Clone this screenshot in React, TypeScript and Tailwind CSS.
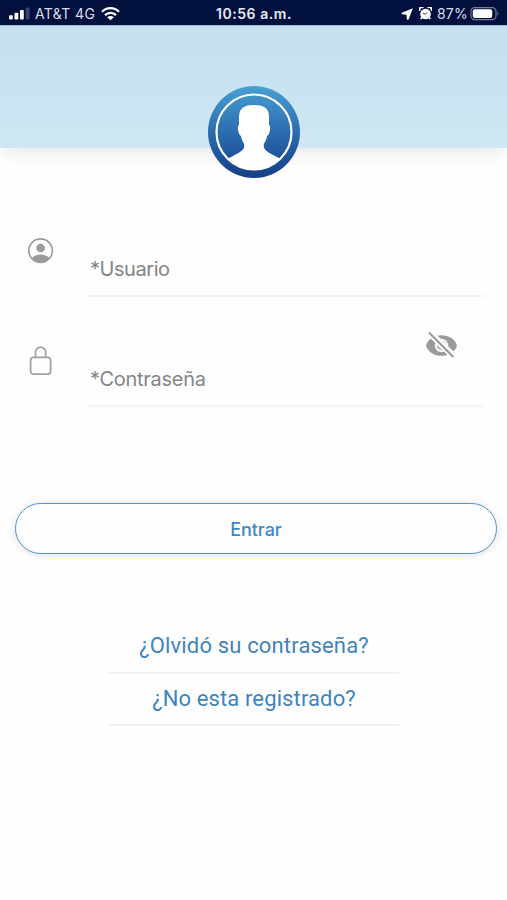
import React from "react";

function StatusBar() {
  return (
    <div className="relative flex h-[25px] items-center justify-between bg-[#02103d] pl-[9px] pr-[7px] pt-[2px] text-[#d9deef]">
      <div className="flex items-center">
        <svg className="h-[13px] w-[21px]" viewBox="0 0 21 13">
          <rect x="0" y="8.2" width="3.8" height="4.3" rx="1" fill="#fff" />
          <rect x="5.5" y="5.8" width="3.8" height="6.7" rx="1" fill="#fff" />
          <rect x="11" y="3" width="3.8" height="9.5" rx="1" fill="#fff" />
          <rect x="16.7" y="0.5" width="3.8" height="12" rx="1" fill="#3b4770" />
        </svg>
        <span className="ml-[5px] w-[66px] whitespace-nowrap text-[14px] leading-[18px] tracking-[0.35px]">AT&amp;T 4G</span>
        <svg className="h-[14px] w-[19px]" viewBox="0 0 19 14" fill="none" stroke="#fff" strokeWidth="2.3">
          <path d="M1 4.7C5.8 0 13.2 0 18 4.7" />
          <path d="M4 8.1c3.1-3 7.9-3 11 0" />
          <path d="M9.5 13.3 6.2 10.2c1.8-1.6 4.8-1.6 6.6 0Z" fill="#fff" stroke="none" />
        </svg>
      </div>
      <div className="absolute left-[216px] top-[5px] whitespace-nowrap text-[14px] font-semibold leading-[18px] tracking-[0.55px] text-[#e5e9f6]">
        10:56 a.m.
      </div>
      <div className="flex items-center">
        <svg className="mr-[6px] h-[12px] w-[12px]" viewBox="0 0 12 12" fill="#fff">
          <path d="M11.900.2 7.600 11.500l-1.700.2-.4-5L.7 6.200l.1-1.500Z" />
        </svg>
        <svg className="mr-[5px] h-[13px] w-[13px]" viewBox="0 0 13 13" fill="none">
          <path d="M1 3.600A2 2 0 0 1 4.200.9M12 3.600A2 2 0 0 0 8.800.9M2.800 10.500l-1 1.500M10.200 10.500l1 1.500" stroke="#fff" strokeWidth="1.900" />
          <circle cx="6.500" cy="7" r="5.300" fill="#fff" />
          <path d="M4 6.200 6.400 7.200 8.200 5.400" stroke="#34416c" strokeWidth="1" />
        </svg>
        <span className="w-[33px] whitespace-nowrap text-[14px] leading-[18px] tracking-[0.2px]">87%</span>
        <svg className="h-[14px] w-[30px]" viewBox="0 0 30 14">
          <rect x="1" y="0.6" width="25" height="12" rx="3.6" fill="none" stroke="#777f9d" strokeWidth="1.1" />
          <rect x="2.8" y="2.2" width="19.4" height="8.8" rx="2" fill="#fff" />
          <path d="M27.4 4.4q2 2.2 0 4.4Z" fill="#777f9d" />
        </svg>
      </div>
    </div>
  );
}

function Avatar() {
  return (
    <svg className="h-[94px] w-[94px]" viewBox="0 0 94 94">
      <defs>
        <linearGradient id="ring" x1="0" y1="0" x2="0" y2="1">
          <stop offset="0" stopColor="#47a0d2" />
          <stop offset="0.5" stopColor="#2c6cb0" />
          <stop offset="1" stopColor="#153f87" />
        </linearGradient>
        <clipPath id="disc"><circle cx="47" cy="47" r="38" /></clipPath>
      </defs>
      <circle cx="47" cy="47" r="46" fill="url(#ring)" />
      <circle cx="47" cy="47" r="37.5" fill="none" stroke="#fff" strokeWidth="2.2" />
      <path
        clipPath="url(#disc)"
        fill="#fff"
        d="M47 20C37 20 32 23 32 32V40C30.8 40.5 30.6 42.5 31 44.500C31.500 48 32.500 50.500 34 51C34.500 54.500 36 57 37.200 59V62C36.500 66 29 69.500 22 73V88H72V73C65 69.500 57.500 66 56.800 62V59C58 57 59.500 54.500 60 51C61.500 50.500 62.500 48 63 44.500C63.400 42.500 63.200 40.500 62 40V32C62 23 57 20 47 20Z"
      />
    </svg>
  );
}

export default function App() {
  return (
    <main className="h-[900px] w-[507px] overflow-hidden bg-[#fefefe] font-['Inter',sans-serif]">
      <StatusBar />
      <header className="flex h-[123px] justify-center border-t border-[#a5bdd8] bg-linear-to-b from-[#c3dff0] to-[#cee7f2] pl-px pt-[59px] shadow-[0_8px_16px_-5px_rgba(70,50,50,0.13)]">
        <Avatar />
      </header>

      <form className="flex flex-col">
        <div className="mt-[84px] flex h-[65px] pl-[27px]">
          <svg className="mt-[5px] h-[28px] w-[28px]" viewBox="0 0 28 28">
            <defs><clipPath id="user"><circle cx="13.6" cy="13.7" r="12" /></clipPath></defs>
            <circle cx="13.6" cy="13.7" r="11.8" fill="none" stroke="#9a9a9a" strokeWidth="1.6" />
            <circle cx="13.6" cy="11" r="4.3" fill="#9a9a9a" />
            <ellipse cx="13.6" cy="23" rx="9" ry="5.5" fill="#9a9a9a" clipPath="url(#user)" />
          </svg>
          <label className="ml-[33px] h-[65px] w-[396px] border-b-2 border-[#f3f3f3] pl-[2px] pt-[25px] text-[20px] leading-[24px] tracking-[-0.45px] text-[#858585]">*Usuario</label>
        </div>

        <div className="mt-[29px] flex h-[81px] pl-[27px]">
          <svg className="mt-[19px] h-[32px] w-[28px]" viewBox="0 0 28 32" fill="none" stroke="#a0a0a0" strokeWidth="1.7">
            <rect x="3.6" y="12.3" width="20" height="16.9" rx="3" />
            <path d="M8.500 12V7.200a5.100 5.100 0 0 1 10.200 0V12" />
          </svg>
          <label className="ml-[33px] flex h-[81px] w-[395px] justify-between border-b-2 border-[#f3f3f3] pl-[2px] text-[20px] leading-[24px] text-[#858585]">
            <span className="pt-[41px] tracking-[-0.28px]">*Contraseña</span>
            <svg className="mr-[25px] mt-[4px] h-[30px] w-[33px]" viewBox="0 0 33 30">
              <path d="M1 15.500C5 1.700 28 1.700 32 15.500 28 29.300 5 29.300 1 15.500Z" fill="#9a9a9a" />
              <circle cx="16.5" cy="15.5" r="6.8" fill="#f5f5f5" />
              <circle cx="16.5" cy="15.5" r="4.6" fill="#b8b8b8" />
              <path d="m6 1.700 25 24.500" stroke="#fefefe" strokeWidth="3.4" />
              <path d="M3.500 12.500 16.500 26" stroke="none" />
              <path d="m4 3.200 24.300 24" stroke="#fefefe" strokeWidth="5" />
              <path d="m4 2.500 24.300 24.500" stroke="#999" strokeWidth="2" />
            </svg>
          </label>
        </div>

        <button type="button" className="ml-[15px] mt-[96px] h-[51px] w-[482px] rounded-full border-[1.5px] border-[#4f93cc] bg-[#fefefe] pt-[2px] text-[18px] font-medium leading-[24px] tracking-[-0.1px] text-[#3d87c5] shadow-[0_1px_8px_rgba(0,0,0,0.12)]">
          Entrar
        </button>
      </form>

      <nav className="ml-[109px] mt-[66px] flex w-[290px] flex-col text-center font-['Roboto',sans-serif] text-[22px] leading-[28px] text-[#3d84bf]">
        <a className="h-[54px] border-b-2 border-[#f0f1f1] pt-[12px] tracking-[0.16px]">¿Olvidó su contraseña?</a>
        <a className="h-[52px] border-b-2 border-[#f0f1f1] pt-[11px] tracking-[0.12px]">¿No esta registrado?</a>
      </nav>
    </main>
  );
}
